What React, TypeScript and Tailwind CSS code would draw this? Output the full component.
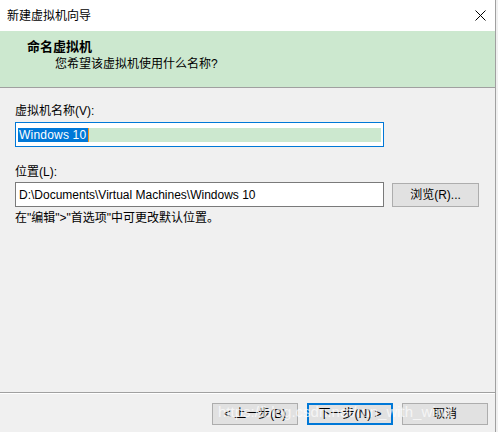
import React from "react";

const font = {
  fontFamily: '"Liberation Sans", "Noto Sans CJK SC", sans-serif',
};

function WinButton({ children, primary }: { children: React.ReactNode; primary?: boolean }) {
  return (
    <button
      type="button"
      className={
        "flex h-[22px] w-[86px] items-center justify-center bg-[#e1e1e1] text-[12px] leading-none text-black " +
        (primary ? "border-2 border-[#0078d7]" : "border border-[#adadad]")
      }
    >
      {children}
    </button>
  );
}

export default function App() {
  return (
    <div className="relative flex h-[432px] w-[498px] overflow-hidden bg-[#f0f0f0] text-black" style={font}>
      <div className="flex w-[496px] flex-col border-r border-[#a0a0a0]">
        {/* title bar */}
        <div className="flex h-[31px] shrink-0 items-center justify-between bg-white pl-[7px] pr-[9px]">
          <span className="text-[12px]">新建虚拟机向导</span>
          <svg width="11" height="11" viewBox="0 0 11 11">
            <path d="M0.5 0.5 L10.5 10.5 M10.5 0.5 L0.5 10.5" stroke="#000" strokeWidth="1" />
          </svg>
        </div>

        {/* header */}
        <div className="h-[57px] shrink-0 border-b border-[#a0a0a0] bg-[#cce8cf] pl-[27px] pt-[7px]">
          <div className="text-[13px] font-bold leading-[18px]">命名虚拟机</div>
          <div className="pl-[28px] text-[12px] leading-[16px]">您希望该虚拟机使用什么名称?</div>
        </div>

        {/* body */}
        <div className="flex-1 px-[15px] pt-[15px] text-[12px]">
          <div className="leading-[16px]">虚拟机名称(V):</div>
          <div className="mt-[3px] flex h-[25px] w-[369px] items-center border border-[#0078d7] bg-white px-[2px]">
            <div className="flex h-[14px] flex-1 items-center bg-[#cce8cf]">
              <span className="flex h-[14px] items-center bg-[#0078d7] pl-[1px] pr-[2px] text-[12px] leading-none tracking-[0.2px] text-white">
                Windows 10
              </span>
              <span className="h-[14px] w-px bg-[#f7931e]" />
            </div>
          </div>

          <div className="mt-[17px] leading-[16px]">位置(L):</div>
          <div className="mt-[2px] flex items-start gap-[8px]">
            <div className="flex h-[25px] w-[369px] items-center border border-[#7a7a7a] bg-white pl-[3px]">
              D:\Documents\Virtual Machines\Windows 10
            </div>
            <button
              type="button"
              className="mt-px flex h-[24px] w-[87px] items-center justify-center border border-[#adadad] bg-[#e1e1e1] text-[12px]"
            >
              浏览(R)...
            </button>
          </div>
          <div className="mt-[3px] leading-[16px]">在"编辑"&gt;"首选项"中可更改默认位置。</div>
        </div>

        {/* footer */}
        <div className="h-[40px] shrink-0 border-t border-[#a0a0a0]">
          <div className="h-px bg-white" />
          <div className="flex justify-end gap-[9px] pr-[7px] pt-[9px]">
            <WinButton>&lt; 上一步(B)</WinButton>
            <WinButton primary>下一步(N) &gt;</WinButton>
            <WinButton>取消</WinButton>
          </div>
        </div>
      </div>

      {/* watermark */}
      <div className="pointer-events-none absolute left-[218px] top-[403px] text-[15px] leading-[18px] text-white/70">
        https://blog.csdn.net/run_with_wind
      </div>
    </div>
  );
}
